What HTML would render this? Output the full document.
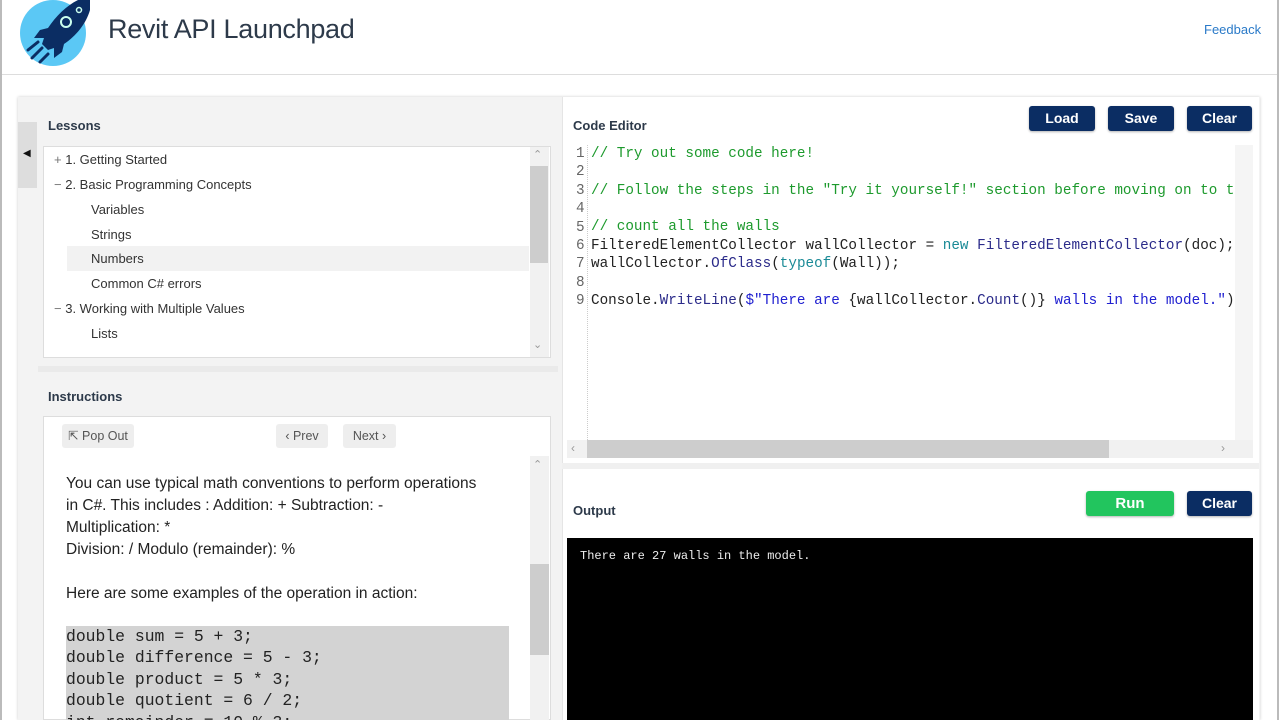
<!DOCTYPE html>
<html><head><meta charset="utf-8"><style>
*{box-sizing:border-box;margin:0;padding:0}
body{width:1280px;height:720px;overflow:hidden;background:#fff;font-family:"Liberation Sans",sans-serif;position:relative;color:#222}
.abs{position:absolute}
.mono{font-family:"Liberation Mono",monospace}
.btn{position:absolute;background:#0b2d63;color:#fff;font-size:14px;font-weight:bold;text-align:center;border-radius:3px;line-height:25px;height:25px;box-shadow:0 1px 2px rgba(0,0,0,.3)}
.h{position:absolute;font-size:13px;font-weight:bold;color:#2d3a4a}
.tree div{position:absolute;font-size:13px;color:#333;white-space:nowrap}
.code div{position:absolute;white-space:pre;font-size:14.3px;line-height:18px}
.ln{position:absolute;color:#666;font-size:14.3px;line-height:18px;font-family:"Liberation Mono",monospace}
.c{color:#1d9a2d}
.k{color:#1a8a96}
.t{color:#2b2b8a}
.s{color:#2020d0}
.gb{position:absolute;background:#eee;border-radius:3px;font-size:12.5px;color:#555;text-align:center;line-height:24px;height:24px}
</style></head><body>
<div class="abs" style="left:0;top:0;width:2px;height:720px;background:#bbb"></div>
<div class="abs" style="left:1277px;top:0;width:2px;height:720px;background:#bbb"></div>
<svg class="abs" style="left:18px;top:0" width="75" height="68" viewBox="0 0 75 68">
<circle cx="35" cy="33" r="33" fill="#5bc8f5"/>
<path d="M72 0 L60 0 C48 6 38 16 30 28 L22 30 L16 38 L26 38 L24 44 L30 50 L36 48 L36 58 L44 52 L46 44 C58 36 68 24 72 10 Z" fill="#0b2d63"/>
<circle cx="48" cy="22" r="5" fill="none" stroke="#cfe" stroke-width="2"/>
<circle cx="61" cy="10" r="2.5" fill="none" stroke="#cfe" stroke-width="1.5"/>
<path d="M10 50 L20 42 M14 58 L24 48 M22 62 L30 54" stroke="#0b2d63" stroke-width="3" stroke-linecap="round"/>
</svg>
<div class="abs" style="left:108px;top:14px;font-size:27px;color:#2d3a4a;letter-spacing:-0.3px">Revit API Launchpad</div>
<div class="abs" style="left:1204px;top:22px;font-size:13px;color:#2a7ac8">Feedback</div>
<div class="abs" style="left:2px;top:74px;width:1275px;height:1px;background:#ddd"></div>
<div class="abs" style="left:18px;top:97px;width:1242px;height:623px;background:#f3f3f3;box-shadow:0 0 3px rgba(0,0,0,.2)"></div>
<div class="abs" style="left:18px;top:122px;width:19px;height:66px;background:#ddd"></div>
<div class="abs" style="left:23px;top:148px;font-size:10px;color:#111">◀</div>
<div class="h" style="left:48px;top:118px">Lessons</div>
<div class="abs" style="left:43px;top:146px;width:508px;height:212px;background:#fff;border:1px solid #ddd"></div>
<div class="abs" style="left:67px;top:246px;width:462px;height:25px;background:#f2f2f2"></div>
<div class="abs" style="left:530px;top:147px;width:19px;height:210px;background:#f1f1f1"></div>
<div class="abs" style="left:530px;top:166px;width:18px;height:97px;background:#cdcdcd"></div>
<div class="abs" style="left:533px;top:148px;font-size:11px;color:#999">⌃</div>
<div class="abs" style="left:533px;top:338px;font-size:11px;color:#999">⌄</div>
<div class="tree">
<div style="left:54px;top:152px"><span style="color:#777">+ </span>1. Getting Started</div>
<div style="left:54px;top:177px"><span style="color:#777">− </span>2. Basic Programming Concepts</div>
<div style="left:91px;top:202px">Variables</div>
<div style="left:91px;top:227px">Strings</div>
<div style="left:91px;top:251px">Numbers</div>
<div style="left:91px;top:276px">Common C# errors</div>
<div style="left:54px;top:301px"><span style="color:#777">− </span>3. Working with Multiple Values</div>
<div style="left:91px;top:326px">Lists</div>
</div>
<div class="abs" style="left:38px;top:366px;width:520px;height:6px;background:#eaeaea"></div>
<div class="h" style="left:48px;top:389px">Instructions</div>
<div class="abs" style="left:43px;top:416px;width:508px;height:304px;background:#fff;border:1px solid #ddd"></div>
<div class="gb" style="left:62px;top:424px;width:72px">⇱ Pop Out</div>
<div class="gb" style="left:276px;top:424px;width:52px">‹ Prev</div>
<div class="gb" style="left:343px;top:424px;width:53px">Next ›</div>
<div class="abs" style="left:530px;top:456px;width:19px;height:264px;background:#f1f1f1"></div>
<div class="abs" style="left:530px;top:564px;width:19px;height:91px;background:#cdcdcd"></div>
<div class="abs" style="left:533px;top:458px;font-size:11px;color:#999">⌃</div>
<div class="abs" style="left:66px;top:473px;width:445px;font-size:15.5px;line-height:22px;color:#222">You can use typical math conventions to perform operations<br>in C#. This includes : Addition: + Subtraction: -<br>Multiplication: *<br>Division: / Modulo (remainder): %<br><br>Here are some examples of the operation in action:</div>
<div class="abs mono" style="left:66px;top:626px;width:443px;height:94px;background:#d3d3d3;font-size:16.4px;line-height:21.4px;white-space:pre;overflow:hidden">double sum = 5 + 3;
double difference = 5 - 3;
double product = 5 * 3;
double quotient = 6 / 2;
int remainder = 10 % 3;</div>
<div class="abs" style="left:562px;top:97px;width:697px;height:623px;background:#fff;border-left:1px solid #e5e5e5"></div>
<div class="h" style="left:573px;top:118px">Code Editor</div>
<div class="btn" style="left:1029px;top:106px;width:66px">Load</div>
<div class="btn" style="left:1108px;top:106px;width:66px">Save</div>
<div class="btn" style="left:1187px;top:106px;width:65px">Clear</div>
<div class="abs" style="left:587px;top:145px;width:1px;height:295px;border-left:1px dotted #ccc"></div>
<div class="ln" style="left:576px;top:145px;line-height:18.4px;white-space:pre">1
2
3
4
5
6
7
8
9</div>
<div class="abs" style="left:591px;top:145px;width:644px;height:295px;overflow:hidden">
<div class="code mono" style="position:relative">
<div style="left:0;top:0"><span class="c">// Try out some code here!</span></div>
<div style="left:0;top:18px"></div>
<div style="left:0;top:37px"><span class="c">// Follow the steps in the "Try it yourself!" section before moving on to the next</span></div>
<div style="left:0;top:73px"><span class="c">// count all the walls</span></div>
<div style="left:0;top:92px">FilteredElementCollector wallCollector = <span class="k">new</span> <span class="t">FilteredElementCollector</span>(doc);</div>
<div style="left:0;top:110px">wallCollector.<span class="t">OfClass</span>(<span class="k">typeof</span>(Wall));</div>
<div style="left:0;top:147px">Console.<span class="t">WriteLine</span>(<span class="s">$"There are </span>{wallCollector.<span class="t">Count</span>()}<span class="s"> walls in the model."</span>);</div>
</div></div>
<div class="abs" style="left:1235px;top:145px;width:18px;height:295px;background:#f5f5f5"></div>
<div class="abs" style="left:567px;top:440px;width:686px;height:18px;background:#f1f1f1"></div>
<div class="abs" style="left:587px;top:440px;width:522px;height:18px;background:#cdcdcd"></div>
<div class="abs" style="left:571px;top:441px;font-size:12px;color:#999">‹</div>
<div class="abs" style="left:1221px;top:441px;font-size:12px;color:#999">›</div>
<div class="abs" style="left:562px;top:463px;width:697px;height:6px;background:#f0f0f0"></div>
<div class="h" style="left:573px;top:503px">Output</div>
<div class="btn" style="left:1086px;top:491px;width:88px;background:#22c55e;font-size:15px">Run</div>
<div class="btn" style="left:1187px;top:491px;width:65px">Clear</div>
<div class="abs mono" style="left:567px;top:538px;width:686px;height:182px;background:#000;color:#eee;font-size:12px;padding:11px 13px">There are 27 walls in the model.</div>
</body></html>
